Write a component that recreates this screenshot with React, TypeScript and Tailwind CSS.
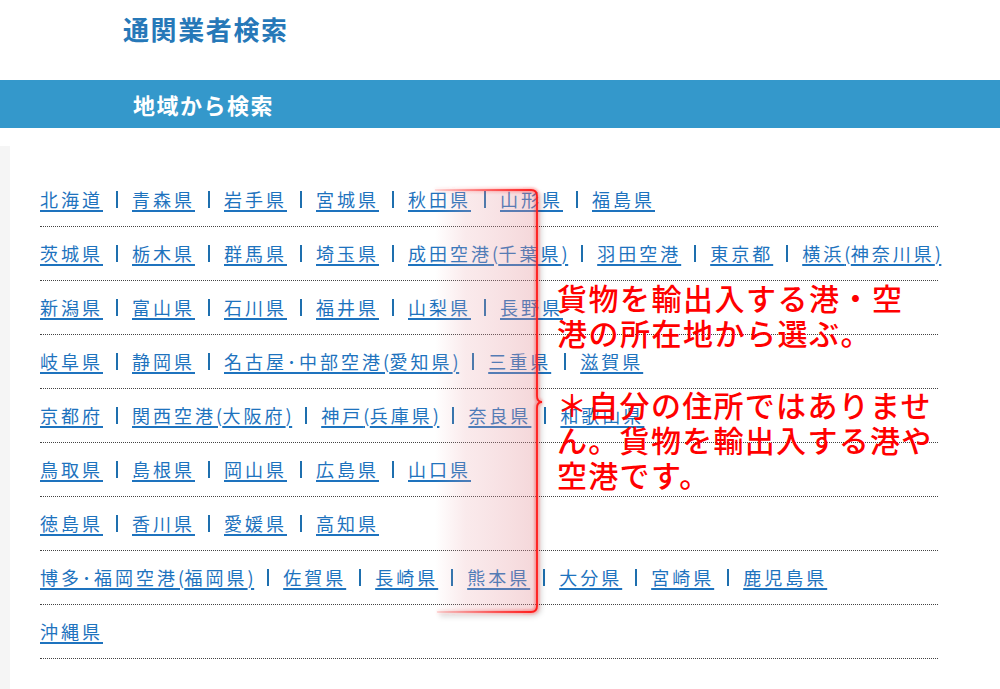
const regions: string[][] = [
  ["北海道", "青森県", "岩手県", "宮城県", "秋田県", "山形県", "福島県"],
  ["茨城県", "栃木県", "群馬県", "埼玉県", "成田空港(千葉県)", "羽田空港", "東京都", "横浜(神奈川県)"],
  ["新潟県", "富山県", "石川県", "福井県", "山梨県", "長野県"],
  ["岐阜県", "静岡県", "名古屋･中部空港(愛知県)", "三重県", "滋賀県"],
  ["京都府", "関西空港(大阪府)", "神戸(兵庫県)", "奈良県", "和歌山県"],
  ["鳥取県", "島根県", "岡山県", "広島県", "山口県"],
  ["徳島県", "香川県", "愛媛県", "高知県"],
  ["博多･福岡空港(福岡県)", "佐賀県", "長崎県", "熊本県", "大分県", "宮崎県", "鹿児島県"],
  ["沖縄県"],
];

// parens are narrower in the original font, so drop the extra tracking on them
const renderName = (name: string) =>
  name.split(/([()])/).map((part, k) =>
    part === "(" || part === ")" ? (
      <span key={k} className="tracking-[0.5px]">
        {part}
      </span>
    ) : (
      part
    )
  );

const Bracket = () => (
  <svg
    className="absolute left-0 top-0 pointer-events-none"
    width="1000"
    height="689"
    viewBox="0 0 1000 689"
  >
    <defs>
      <linearGradient id="fill" gradientUnits="userSpaceOnUse" x1="435" y1="0" x2="537" y2="0">
        <stop offset="0" stopColor="#e8a0a8" stopOpacity="0" />
        <stop offset="0.3" stopColor="#e8a0a8" stopOpacity="0.22" />
        <stop offset="1" stopColor="#e08890" stopOpacity="0.34" />
      </linearGradient>
      <linearGradient id="edge" gradientUnits="userSpaceOnUse" x1="435" y1="0" x2="537" y2="0">
        <stop offset="0" stopColor="#ff4040" stopOpacity="0.15" />
        <stop offset="0.6" stopColor="#ff2a2a" stopOpacity="0.7" />
        <stop offset="1" stopColor="#ff1a1a" stopOpacity="1" />
      </linearGradient>
      <filter id="glow" x="-20%" y="-5%" width="140%" height="110%">
        <feGaussianBlur stdDeviation="1.6" />
      </filter>
      <filter id="shade" x="-20%" y="-5%" width="140%" height="110%">
        <feGaussianBlur stdDeviation="2.5" />
      </filter>
    </defs>
    <path d="M435 190 H531 Q537 190 537 196 V606 Q537 612 531 612 H435 Z" fill="url(#fill)" />
    <path
      d="M540 194 V606 Q540 615 531 615 H440"
      fill="none"
      stroke="#000"
      strokeOpacity="0.18"
      strokeWidth="3"
      filter="url(#shade)"
    />
    <path
      d="M435 190 H531 Q537 190 537 196 V396 Q537 402 542 402 Q537 402 537 408 V606 Q537 612 531 612 H437"
      fill="none"
      stroke="url(#edge)"
      strokeWidth="4"
      strokeOpacity="0.45"
      filter="url(#glow)"
    />
    <path
      d="M435 190 H531 Q537 190 537 196 V396 Q537 402 542 402 Q537 402 537 408 V606 Q537 612 531 612 H437"
      fill="none"
      stroke="url(#edge)"
      strokeWidth="1.8"
    />
  </svg>
);

const App = () => {
  return (
    <div className="relative min-h-[689px] w-[1000px] overflow-hidden bg-white flex flex-col font-['Noto_Sans_CJK_JP','Noto_Sans',sans-serif]">
      <div className="h-[80px] pl-[123px] pt-[16px]">
        <h1 className="text-[26px] leading-[26px] font-bold tracking-[1.6px] text-[#2678b8]">通関業者検索</h1>
      </div>
      <div className="h-[48px] bg-[#3498cb] flex items-center pl-[133px]">
        <h2 className="text-[22px] font-bold tracking-[1.5px] text-white">地域から検索</h2>
      </div>
      <div className="mt-[18px] flex flex-1">
        <div className="w-[10px] bg-[#f5f5f5]" />
        <div className="pl-[30px] pt-[27px]">
          <ul className="w-[898px]">
            {regions.map((row, i) => (
              <li
                key={i}
                className="h-[54px] flex items-center whitespace-nowrap border-b border-dotted border-[#444]"
              >
                {row.map((name, j) => (
                  <span key={name} className="flex items-center">
                    {j > 0 && <span className="ml-[13px] mr-[14px] inline-block w-[2px] h-[17px] bg-[#1e6fae]" />}
                    <a
                      href="#"
                      className="text-[18px] tracking-[3px] text-[#1e73be] underline decoration-2 underline-offset-[3px]"
                    >
                      {renderName(name)}
                    </a>
                  </span>
                ))}
              </li>
            ))}
          </ul>
        </div>
      </div>

      <Bracket />

      <p className="absolute left-[557px] top-[280px] text-[30px] leading-[35px] tracking-[1.5px] font-medium text-[#ff0000]">
        貨物を輸出入する港・空
        <br />
        港の所在地から選ぶ。
      </p>
      <p className="absolute left-[557px] top-[387px] text-[30px] leading-[35px] tracking-[1.3px] font-medium text-[#ff0000]">
        ＊自分の住所ではありませ
        <br />
        ん。貨物を輸出入する港や
        <br />
        空港です。
      </p>
    </div>
  );
};

export default App;
